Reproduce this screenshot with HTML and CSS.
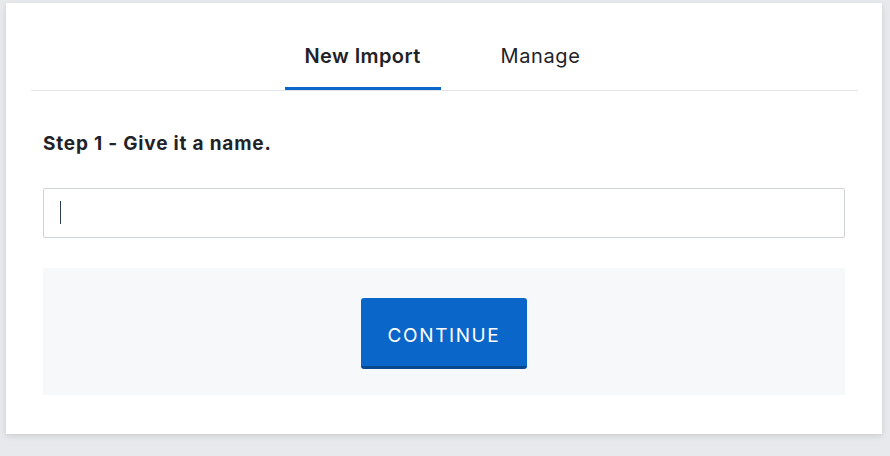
FILE: index.html
```html
<!DOCTYPE html>
<html lang="en">
<head>
    <meta charset="UTF-8">
    <meta name="viewport" content="width=device-width, initial-scale=1.0">
    <title>New Import</title>
    <link rel="stylesheet" href="styles.css">
</head>
<body>
    <div class="card">
        <nav class="tabs">
            <a class="tab active" href="#">New Import</a>
            <a class="tab" href="#">Manage</a>
        </nav>
        <div class="content">
            <h2 class="step">Step 1 - Give it a name.</h2>
            <div class="field">
                <input type="text" class="name-input" aria-label="Name">
                <span class="caret"></span>
            </div>
            <div class="actions">
                <button type="button" class="btn">CONTINUE</button>
            </div>
        </div>
    </div>
</body>
</html>
```

FILE: styles.css
```css
body {
    margin: 0;
    padding: 3px 8px 22px 6px;
    background-color: #e7e9ec;
    font-family: Inter, "Noto Sans", sans-serif;
    color: #1f2328;
}
.card {
    background-color: #fff;
    height: 431px;
    box-sizing: border-box;
    padding: 25px 24px 0 25px;
    box-shadow: 0 2px 6px rgba(0,0,0,0.12);
}
.tabs {
    display: flex;
    justify-content: center;
    gap: 40px;
    border-bottom: 1px solid #e3e5e8;
    height: 62px;
    padding-right: 4px;
}
.tab {
    display: block;
    padding: 16px 20px 0;
    height: 43px;
    font-size: 20px;
    color: #1f2328;
    text-decoration: none;
    border-bottom: 3px solid transparent;
    margin-bottom: -1px;
    letter-spacing: 0.6px;
}
.tab.active {
    font-weight: 600;
    letter-spacing: 0.4px;
    border-bottom-color: #0a66c8;
}
.content {
    padding: 0 13px 0 12px;
}
.step {
    margin: 41px 0 0;
    font-size: 19px;
    font-weight: 700;
    letter-spacing: 0.8px;
    line-height: 24px;
}
.field {
    position: relative;
    margin-top: 32px;
}
.name-input {
    display: block;
    width: 100%;
    height: 50px;
    box-sizing: border-box;
    border: 1px solid #cdd2d9;
    border-radius: 2px;
    padding: 0 16px;
    font-size: 16px;
    outline: none;
}
.caret {
    position: absolute;
    left: 17px;
    top: 13px;
    width: 1px;
    height: 23px;
    background-color: #2b3a55;
}
.actions {
    margin-top: 30px;
    height: 127px;
    background-color: #f7f8fa;
    display: flex;
    justify-content: center;
    padding-top: 30px;
    box-sizing: border-box;
}
.btn {
    width: 166px;
    height: 71px;
    background-color: #0a66c8;
    color: #fff;
    border: none;
    border-bottom: 3px solid #07498f;
    border-radius: 3px;
    font-family: inherit;
    font-size: 19px;
    letter-spacing: 1.6px;
    padding-top: 8px;
    cursor: pointer;
}
.btn:hover {
    background-color: #0856aa;
}
```
